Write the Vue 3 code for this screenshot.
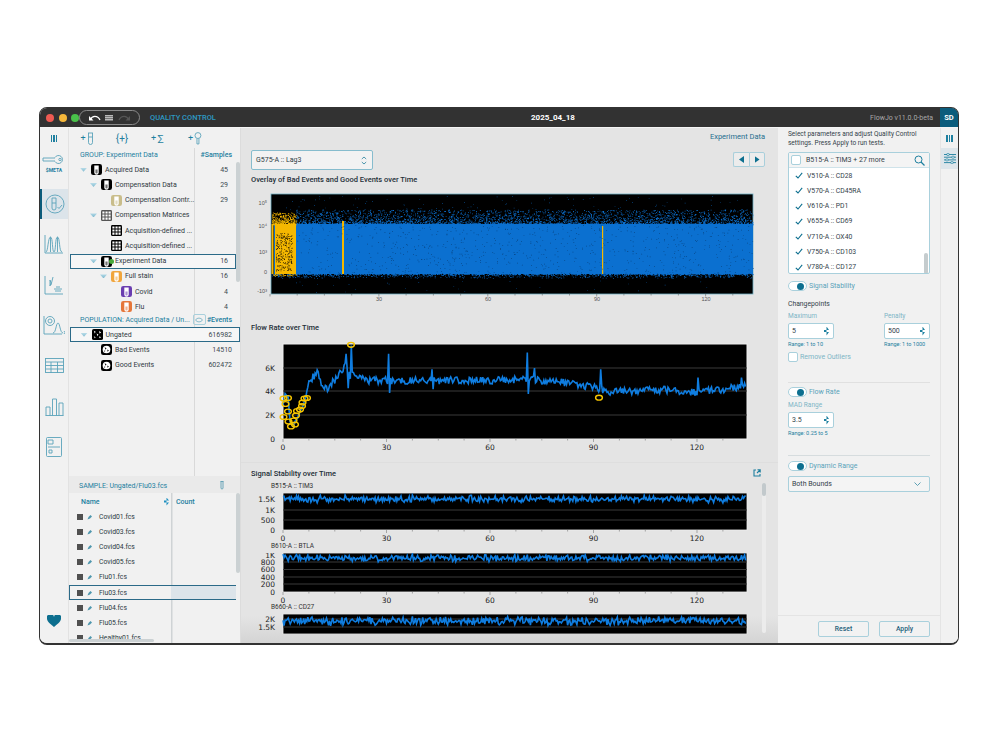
<template>
  <div class="page">
    <!-- shared icons -->
    <svg class="defs" width="0" height="0">
      <symbol id="tube" viewBox="0 0 12 12">
        <rect x="0" y="0" width="12" height="12" rx="2.5" fill="currentColor" />
        <path d="M3.6 1.6h4.8v7.6a2.4 2.400 0 0 1-4.800 0z" fill="#fff" />
        <path d="M4.800 6h2.400v3.200a1.200 1.200 0 0 1-2.400 0z" fill="currentColor" opacity=".55" />
      </symbol>
      <symbol id="grid" viewBox="0 0 12 12">
        <rect x="0" y="0" width="12" height="12" rx="1.5" fill="currentColor" />
        <path d="M1.500 1.500h2.300v2.300H1.500zM4.900 1.500h2.300v2.300H4.900zM8.200 1.500h2.300v2.300H8.200zM1.500 4.900h2.300v2.300H1.500zM4.900 4.900h2.300v2.300H4.900zM8.200 4.900h2.300v2.300H8.200zM1.500 8.200h2.300v2.300H1.500zM4.900 8.200h2.300v2.300H4.900zM8.200 8.200h2.300v2.300H8.200z" fill="#fff" />
      </symbol>
      <symbol id="gate" viewBox="0 0 12 12">
        <rect x="0" y="0" width="12" height="12" rx="2" fill="#000" />
        <path d="M2 2l2 1-1 2zM8 2l2 2-2 1zM5 5l2 1-1 2zM2 8l2 1-1 1zM8 8l2 1-2 1z" fill="#fff" />
      </symbol>
      <symbol id="pop" viewBox="0 0 12 12">
        <rect x="0" y="0" width="12" height="12" rx="2.5" fill="#000" />
        <circle cx="6" cy="6" r="4.2" fill="#fff" />
        <path d="M4 3.600l2 1-1 1.600zM7 6l1.600 1-1.600 1.400zM3.400 7l1.400.4-.8 1.200z" fill="#000" />
      </symbol>
    </svg>

    <div class="window">
      <!-- title bar -->
      <header class="titlebar">
        <div class="lights">
          <span class="light red"></span>
          <span class="light amber"></span>
          <span class="light green"></span>
        </div>
        <div class="history">
          <svg width="14" height="10" viewBox="0 0 14 10"><path d="M2.500 6.500C4 2.500 9.500 2 12 7" fill="none" stroke="#fff" stroke-width="1.300" /><path d="M1 3v4.500h4.500z" fill="#fff" /></svg>
          <span class="history-list"></span>
          <svg width="14" height="10" viewBox="0 0 14 10"><path d="M11.500 6.500C10 2.500 4.500 2 2 7" fill="none" stroke="#555" stroke-width="1.300" /><path d="M13 3v4.500H8.500z" fill="#555" /></svg>
        </div>
        <span class="module">QUALITY CONTROL</span>
        <span class="doc-title">2025_04_18</span>
        <span class="version">FlowJo v11.0.0-beta</span>
        <span class="avatar">SD</span>
      </header>

      <div class="body">
        <!-- left rail -->
        <nav class="rail">
          <div class="rail-bars"><i></i><i></i><i></i></div>
          <div class="rail-item">
            <svg width="24" height="11" viewBox="0 0 24 11" class="ln"><path d="M1 4h12M1 7h12M1 4v3M13 3.500a4 4 0 1 1 0 4" /><circle cx="18" cy="5.500" r="1.200" /></svg>
            <span class="meta">$META</span>
          </div>
          <div class="rail-item active">
            <svg width="20" height="20" viewBox="0 0 20 20" class="ln"><circle cx="10" cy="10" r="9" /><path d="M7 4h4v10a2 2 0 0 1-4 0zM7 9h4M12.500 13l1.500 1.500 3-3.500" /></svg>
          </div>
          <div class="rail-item">
            <svg width="20" height="20" viewBox="0 0 20 20" class="ln"><path d="M1 1v18h18M2 18C4 18 4 3 6.500 3S8 18 10 18 11 3 13.500 3 15 18 18 18M6.500 3v15M13.500 3v15" /></svg>
          </div>
          <div class="rail-item">
            <svg width="20" height="20" viewBox="0 0 20 20" class="ln"><path d="M1 1v18h18M6 5v6l1-3zM9 2l-2 8M10 14h8M11 16h6M12 12h4" /></svg>
          </div>
          <div class="rail-item">
            <svg width="22" height="20" viewBox="0 0 22 20" class="ln"><path d="M1 1v18h18M10 18c3 0 3-10 5-10s2 10 5 10M21 16l1 1.500-1 1.500" /><circle cx="7" cy="6" r="4.500" /><circle cx="7" cy="6" r="2" /></svg>
          </div>
          <div class="rail-item">
            <svg width="19" height="15" viewBox="0 0 19 15" class="ln"><rect x=".5" y=".5" width="18" height="14" /><path d="M.5 4h18M.5 7.500h18M.5 11h18M6 4v11M12.500 4v11" /></svg>
          </div>
          <div class="rail-item">
            <svg width="19" height="19" viewBox="0 0 19 19" class="ln"><path d="M.5 18.500h18M1 18.500V10h4v8.500M7.500 18.500V2h4v16.500M14 18.500V6h4v12.500" /></svg>
          </div>
          <div class="rail-item">
            <svg width="16" height="20" viewBox="0 0 16 20" class="ln"><rect x=".5" y=".5" width="15" height="19" rx="1" /><path d="M2 10h12M2 3h5v4H2zM3 13h3v3H3z" /></svg>
          </div>
          <svg class="heart" width="14" height="12" viewBox="0 0 14 12"><path d="M7 12C2 8 0 6 0 3.500A3.400 3.400 0 0 1 7 2a3.400 3.400 0 0 1 7 1.500C14 6 12 8 7 12z" fill="#0d6f8f" /></svg>
        </nav>

        <!-- tree panel -->
        <aside class="tree-panel">
          <div class="tools">
            <span class="tool"><b>+</b><svg width="7" height="13" viewBox="0 0 7 13" class="ln"><path d="M1 1h5M1.500 1v9.500a2 2 0 0 0 4 0V1M1.500 5h4" /></svg></span>
            <span class="tool">{+}</span>
            <span class="tool"><b>+</b>∑</span>
            <span class="tool"><b>+</b><svg width="8" height="13" viewBox="0 0 8 13" class="ln"><circle cx="4" cy="3.500" r="3" /><path d="M3 6.500V12h2V6.500" /></svg></span>
          </div>

          <div class="tree-head">
            <span class="head-name">GROUP: Experiment Data</span>
            <span class="head-count">#Samples</span>
          </div>
          <div class="tree group-tree">
            <div v-for="(row, i) in groupRows" :key="i" class="tree-row" :class="{ selected: row.selected }" :style="{ paddingLeft: 10 + row.level * 10 + 'px' }">
              <span class="caret" :class="{ open: row.open }"></span>
              <svg class="node-icon" :style="{ color: row.color }"><use :href="'#' + row.icon" /></svg>
              <span v-if="row.selected" class="ok-dot"></span>
              <span class="node-label">{{ row.label }}</span>
              <span class="node-count">{{ row.count }}</span>
            </div>
            <span class="tree-scroll"></span>
          </div>

          <div class="tree-head pop-head">
            <span class="head-name">POPULATION: Acquired Data / Un...</span>
            <span class="eye"><svg width="8" height="6" viewBox="0 0 8 6"><path d="M.5 3C2 .5 6 .5 7.500 3 6 5.500 2 5.500.5 3z" fill="none" stroke="#5aa3ba" stroke-width=".7" /></svg></span>
            <span class="head-count">#Events</span>
          </div>
          <div class="tree pop-tree">
            <div v-for="row in popRows" :key="row.label" class="tree-row" :class="{ selected: row.selected }" :style="{ paddingLeft: 10 + row.level * 10 + 'px' }">
              <span class="caret" :class="{ open: row.open }"></span>
              <svg class="node-icon"><use :href="'#' + row.icon" /></svg>
              <span class="node-label">{{ row.label }}</span>
              <span class="node-count">{{ row.count }}</span>
            </div>
          </div>

          <div class="sample-head">
            <span>SAMPLE: Ungated/Flu03.fcs</span>
            <svg width="4" height="9" viewBox="0 0 4 9"><path d="M.5.500h3M1 .500v6.500a1 1 0 0 0 2 0V.500" fill="none" stroke="#4d96ad" stroke-width=".8" /></svg>
          </div>
          <div class="sample-table">
            <div class="sample-cols">
              <span class="col-name">Name</span>
              <span class="sort"></span>
              <span class="col-count">Count</span>
            </div>
            <div v-for="f in files" :key="f" class="sample-row" :class="{ selected: f === 'Flu03.fcs' }">
              <span class="file-icon"></span>
              <svg class="pen" width="6" height="6" viewBox="0 0 6 6"><path d="M.5 5.500l1-2.500 2-2 1.500 1.500-2 2z" fill="#4d96ad" /></svg>
              <span class="file-name">{{ f }}</span>
            </div>
            <span class="sample-scroll"></span>
            <span class="sample-hscroll"></span>
          </div>
        </aside>

        <!-- charts -->
        <main class="main">
          <div class="crumb">Experiment Data</div>
          <div class="param-row">
            <div class="param-select">
              <span>G575-A :: Lag3</span>
              <svg width="6" height="9" viewBox="0 0 6 9"><path d="M.8 3L3 1l2.200 2M.8 6L3 8l2.200-2" fill="none" stroke="#4d96ad" stroke-width="1" /></svg>
            </div>
            <div class="pager">
              <button><i class="arrow-l"></i></button>
              <button><i class="arrow-r"></i></button>
            </div>
          </div>
          <h3 class="chart-title first">Overlay of Bad Events and Good Events over Time</h3>
          <svg class="overlay" viewBox="245 187 525 117" width="525" height="117">
            <rect x="271" y="193" width="482" height="100" fill="#000" stroke="#6fb0c4" stroke-width=".8" />
            <rect x="296" y="223" width="457" height="50" fill="#0b70d0" />
            <path :d="scatter.blue" fill="#0b70d0" />
            <rect x="271.500" y="223" width="2" height="50" fill="#f5b800" />
            <rect x="274" y="223" width="1" height="50" fill="#0b70d0" />
            <rect x="275" y="223" width="21" height="50" fill="#f5b800" />
            <path :d="scatter.yellow" fill="#f5b800" />
            <rect x="342" y="220" width="2" height="53" fill="#f5b800" />
            <rect x="602" y="225" width="1.200" height="48" fill="#f5b800" />
            <path :d="scatter.black" fill="#063a70" />
            <path :d="scatter.dark" fill="#2a1d00" />
            <g class="axis-sm">
              <text x="379" y="300" text-anchor="middle">30</text>
              <text x="488" y="300" text-anchor="middle">60</text>
              <text x="597" y="300" text-anchor="middle">90</text>
              <text x="706" y="300" text-anchor="middle">120</text>
              <text x="267" y="204" text-anchor="end">10⁵</text>
              <text x="267" y="227" text-anchor="end">10⁴</text>
              <text x="267" y="253" text-anchor="end">10³</text>
              <text x="267" y="273" text-anchor="end">0</text>
              <text x="267" y="292" text-anchor="end">-10³</text>
            </g>
            <path :d="overlayTicks" stroke="#666" stroke-width=".6" fill="none" />
          </svg>

          <h3 class="chart-title second">Flow Rate over Time</h3>
          <svg class="flow" viewBox="245 334 525 117" width="525" height="117">
            <rect x="283" y="343" width="464" height="95" fill="#000" stroke="#eee" stroke-width="1" />
            <path d="M283 367h464M283 390h464M283 414h464" stroke="#3a3a3a" stroke-width="1" />
            <polyline :points="flowLine" fill="none" stroke="#0f7de0" stroke-width="1.600" />
            <ellipse v-for="(p, i) in flowMarks" :key="i" :cx="p[0]" :cy="p[1]" rx="3.400" ry="2.400" fill="none" stroke="#f5c400" stroke-width="1.400" />
            <g class="axis">
              <text v-for="t in xLabels" :key="t" :x="tx(t)" y="449" text-anchor="middle">{{ t }}</text>
              <text x="275" y="370" text-anchor="end">6K</text>
              <text x="275" y="393" text-anchor="end">4K</text>
              <text x="275" y="417" text-anchor="end">2K</text>
              <text x="275" y="441" text-anchor="end">0</text>
            </g>
            <path :d="ticks(438)" stroke="#777" stroke-width=".6" fill="none" />
          </svg>

          <section class="signals">
            <div class="signals-head">
              <h3 class="chart-title">Signal Stability over Time</h3>
              <svg width="8" height="8" viewBox="0 0 8 8"><path d="M3 1H1v6h6V5M4.500.800h2.700v2.700M7 1L4 4" fill="none" stroke="#1d7f9f" stroke-width="1.100" /></svg>
            </div>
            <div class="signals-body">
              <div v-for="plot in signalPlots" :key="plot.name" class="signal" :style="{ height: plot.blockH + 'px' }">
                <div class="signal-name">{{ plot.name }}</div>
                <svg :viewBox="`245 ${plot.top} 515 ${plot.h + 14}`" width="515" :height="plot.h + 14">
                  <rect x="283" :y="plot.top" width="464" :height="plot.h" fill="#000" stroke="#eee" stroke-width=".8" />
                  <path :d="plot.grid" stroke="#3a3a3a" stroke-width="1" />
                  <polyline :points="plot.line" fill="none" stroke="#0f7de0" stroke-width="1.600" />
                  <g class="axis">
                    <text v-for="l in plot.labels" :key="l[0]" x="275" :y="l[1] + 2.500" text-anchor="end">{{ l[0] }}</text>
                    <template v-if="plot.xAxis">
                      <text v-for="t in xLabels" :key="t" :x="tx(t)" :y="plot.top + plot.h + 10.500" text-anchor="middle">{{ t }}</text>
                    </template>
                  </g>
                  <path v-if="plot.xAxis" :d="ticks(plot.top + plot.h)" stroke="#777" stroke-width=".6" fill="none" />
                </svg>
              </div>
              <div class="signals-scroll"><span></span></div>
            </div>
          </section>
        </main>

        <!-- settings -->
        <aside class="settings">
          <div class="settings-scroll">
            <p class="intro">Select parameters and adjust Quality Control settings. Press Apply to run tests.</p>
            <div class="multi">
              <div class="multi-head">
                <span class="check"></span>
                <span class="multi-title">B515-A :: TIM3 + 27 more</span>
                <svg width="11" height="11" viewBox="0 0 11 11"><circle cx="4.500" cy="4.500" r="3.500" fill="none" stroke="#1d7f9f" stroke-width="1" /><path d="M7 7l3.500 3.500" stroke="#1d7f9f" stroke-width="1.200" /></svg>
              </div>
              <div class="multi-list">
                <div v-for="p in params" :key="p" class="multi-row">
                  <svg width="8" height="7" viewBox="0 0 8 7"><path d="M.8 3.800L3 6 7.200.8" fill="none" stroke="#0d6f8f" stroke-width="1.100" /></svg>
                  <span>{{ p }}</span>
                </div>
                <span class="multi-scroll"></span>
              </div>
            </div>

            <label class="toggle-row stability"><span class="toggle"><i></i></span>Signal Stability</label>
            <div class="subhead">Changepoints</div>
            <div class="spin-pair">
              <div class="spin-field">
                <div class="spin-label">Maximum</div>
                <div class="spin"><span>5</span><em></em></div>
                <div class="range">Range: 1 to 10</div>
              </div>
              <div class="spin-field">
                <div class="spin-label">Penalty</div>
                <div class="spin"><span>500</span><em></em></div>
                <div class="range">Range: 1 to 1000</div>
              </div>
            </div>
            <label class="outliers"><span class="check"></span>Remove Outliers</label>

            <hr class="rule flow-rule" />
            <label class="toggle-row"><span class="toggle"><i></i></span>Flow Rate</label>
            <div class="spin-field mad">
              <div class="spin-label">MAD Range</div>
              <div class="spin"><span>3.5</span><em></em></div>
              <div class="range">Range: 0.25 to 5</div>
            </div>

            <hr class="rule dyn-rule" />
            <label class="toggle-row"><span class="toggle"><i></i></span>Dynamic Range</label>
            <div class="bounds">
              <span>Both Bounds</span>
              <svg width="7" height="4" viewBox="0 0 7 4"><path d="M.5.500L3.500 3.500 6.500.500" fill="none" stroke="#4d96ad" stroke-width=".9" /></svg>
            </div>
          </div>
          <div class="settings-foot">
            <button>Reset</button>
            <button>Apply</button>
          </div>
        </aside>

        <!-- right rail -->
        <div class="side-rail">
          <div class="rail-bars"><i></i><i></i><i></i></div>
          <div class="side-tab">
            <svg width="12" height="11" viewBox="0 0 12 11"><path d="M0 1.500h12M0 4.200h12M0 6.900h12M0 9.600h12" stroke="#1d7f9f" stroke-width=".9" /><path d="M3 .500h2v2H3zM8 3.200h2v2H8zM2 5.900h2v2H2zM7 8.600h2v2H7z" fill="#fff" stroke="#1d7f9f" stroke-width=".6" /></svg>
          </div>
        </div>
      </div>
    </div>
  </div>
</template>

<script setup>
// small seeded generator so the noise looks the same on every load
function makeRandom(seed) {
  let s = seed;
  return () => {
    s = (s * 16807) % 2147483647;
    return (s - 1) / 2147483646;
  };
}

const groupRows = [
  { label: "Acquired Data", level: 0, open: true, icon: "tube", color: "#000", count: 45 },
  { label: "Compensation Data", level: 1, open: true, icon: "tube", color: "#000", count: 29 },
  { label: "Compensation Contr...", level: 2, icon: "tube", color: "#c9bd8a", count: 29 },
  { label: "Compensation Matrices", level: 1, open: true, icon: "grid", color: "#555", count: "" },
  { label: "Acquisition-defined ...", level: 2, icon: "grid", color: "#000", count: "" },
  { label: "Acquisition-defined ...", level: 2, icon: "grid", color: "#000", count: "" },
  { label: "Experiment Data", level: 1, open: true, icon: "tube", color: "#000", count: 16, selected: true },
  { label: "Full stain", level: 2, open: true, icon: "tube", color: "#f0a53c", count: 16 },
  { label: "Covid", level: 3, icon: "tube", color: "#6a3db0", count: 4 },
  { label: "Flu", level: 3, icon: "tube", color: "#e5763a", count: 4 },
];

const popRows = [
  { label: "Ungated", level: 0, open: true, icon: "gate", count: 616982, selected: true },
  { label: "Bad Events", level: 1, icon: "pop", count: 14510 },
  { label: "Good Events", level: 1, icon: "pop", count: 602472 },
];

const files = ["Covid01.fcs", "Covid03.fcs", "Covid04.fcs", "Covid05.fcs", "Flu01.fcs", "Flu03.fcs", "Flu04.fcs", "Flu05.fcs", "Healthy01.fcs"];

const params = ["V510-A :: CD28", "V570-A :: CD45RA", "V610-A :: PD1", "V655-A :: CD69", "V710-A :: OX40", "V750-A :: CD103", "V780-A :: CD127"];

const xLabels = [0, 30, 60, 90, 120];
const tx = (t) => 283 + t * 3.45;

// minor ticks every 7.5 units under a plot
const ticks = (y) => {
  let d = "";
  for (let t = 0; t <= 134; t += 7.5) {
    const len = t % 30 === 0 ? 3 : 1.5;
    d += `M${tx(t).toFixed(1)} ${y}v${len}`;
  }
  return d;
};

let overlayTicks = "";
for (let t = 0; t <= 130; t += 7.5) {
  const x = 270 + t * 3.63;
  overlayTicks += `M${x.toFixed(1)} 293v${t % 30 === 0 ? 2.5 : 1.5}`;
}

// overlay scatter, kept as single paths
function buildScatter() {
  const rnd = makeRandom(4242);
  const dot = (x, y, s = 0.8) => `M${x.toFixed(1)} ${y.toFixed(1)}h${s}v${s}h-${s}z`;
  let blue = "";
  let yellow = "";
  let black = "";
  let dark = "";
  for (let i = 0; i < 5200; i++) {
    blue += dot(296 + rnd() * 457, 223.5 - Math.pow(rnd(), 3.2) * 15);
  }
  for (let i = 0; i < 90; i++) blue += dot(280 + rnd() * 473, 195 + rnd() * 14, 0.6);
  for (let i = 0; i < 1300; i++) blue += dot(272 + rnd() * 481, 273 + Math.pow(rnd(), 4) * 4);
  for (let i = 0; i < 30; i++) blue += dot(272 + rnd() * 481, 279 + rnd() * 13, 0.6);
  for (let i = 0; i < 420; i++) yellow += dot(272 + rnd() * 24, 223.5 - Math.pow(rnd(), 2) * 12);
  for (let i = 0; i < 40; i++) yellow += dot(272 + rnd() * 24, 273 + rnd() * 2);
  for (let i = 0; i < 750; i++) black += dot(296 + rnd() * 457, 224 + rnd() * 49, 0.7);
  for (let i = 0; i < 260; i++) dark += dot(276 + rnd() * 16, 232 + rnd() * 38, 0.8);
  return { blue, yellow, black, dark };
}
const scatter = buildScatter();

// flow rate curve from hand read anchors, then noise and spikes on top
const flowAnchors = [[0, 3000], [0.6, 3900], [1.5, 3500], [2, 1500], [3, 1100], [5, 2300], [6.5, 3400], [7.5, 4900], [9, 5300], [10, 5800], [11, 4700], [13, 4300], [15, 5000], [17, 5800], [18, 6300], [19, 5400], [21, 5300], [25, 4950], [60, 4950], [70, 5050], [80, 4850], [90, 4350], [95, 4000], [110, 4150], [120, 3950], [126, 4150], [134, 4450]];
const flowSpikes = { 18.3: 7200, 18.9: 4300, 19.8: 7900, 30.6: 7200, 30.9: 3900, 43.5: 4200, 43.2: 5900, 70.8: 7300, 71.1: 3800, 72.9: 6000, 92: 5900, 120.3: 5200, 120: 3700, 133: 5200 };

const flowY = (v) => 438 - v * 0.01183;

function anchorValue(t) {
  for (let i = 1; i < flowAnchors.length; i++) {
    const [t0, v0] = flowAnchors[i - 1];
    const [t1, v1] = flowAnchors[i];
    if (t <= t1) return v0 + ((v1 - v0) * (t - t0)) / (t1 - t0);
  }
  return flowAnchors[flowAnchors.length - 1][1];
}

function buildFlow() {
  const rnd = makeRandom(77);
  const pts = [];
  for (let i = 0; i <= 447; i++) {
    const t = i * 0.3;
    let v = anchorValue(t) + (t > 8 ? (rnd() - 0.5) * 620 : (rnd() - 0.5) * 200);
    const key = Object.keys(flowSpikes).find((k) => Math.abs(k - t) < 0.15);
    if (key) v = flowSpikes[key];
    pts.push(`${tx(t).toFixed(1)},${flowY(v).toFixed(1)}`);
  }
  return pts.join(" ");
}
const flowLine = buildFlow();

const flowMarks = [[283.5, 397.5], [288, 397], [285.5, 403], [288, 410.5], [283.5, 416], [288.5, 420.5], [291, 425.5], [295, 423.5], [293.5, 419.5], [296, 414.5], [297, 410], [300, 408.5], [302, 405], [302.5, 401.5], [304.5, 397.5], [307, 397], [351, 343.8], [599, 396.7]];

// stability traces
function buildSignal(y, amp, seed) {
  const rnd = makeRandom(seed);
  const pts = [];
  for (let i = 0; i <= 447; i++) {
    const n = (rnd() + rnd() - 1) * amp;
    pts.push(`${tx(i * 0.3).toFixed(1)},${(y + n).toFixed(1)}`);
  }
  return pts.join(" ");
}

const signalPlots = [
  { name: "B515-A :: TIM3", top: 492, h: 37, blockH: 60, xAxis: true, grid: "M283 509h464M283 519h464", line: buildSignal(498, 4, 11), labels: [["1.5K", 498.5], ["1K", 509], ["500", 519], ["0", 529]] },
  { name: "B610-A :: BTLA", top: 552, h: 39, blockH: 61, xAxis: true, grid: "M283 561h464M283 568.5h464M283 576h464M283 583h464", line: buildSignal(557, 4, 23), labels: [["1K", 554], ["800", 561], ["600", 568.5], ["400", 576], ["200", 583], ["0", 591]] },
  { name: "B660-A :: CD27", top: 613, h: 20, blockH: 30, xAxis: false, grid: "M283 618h464M283 626h464", line: buildSignal(620, 5, 37), labels: [["2K", 618], ["1.5K", 626]] },
];
</script>

<style>
html,
body {
  margin: 0;
  background: #fff;
}
</style>

<style scoped>
.page {
  width: 1000px;
  height: 750px;
  padding: 107px 0 0 39px;
  box-sizing: border-box;
  font-family: Roboto, "Noto Sans", sans-serif;
  color: #2b3a42;
  overflow: hidden;
}

.defs {
  position: absolute;
}

.window {
  width: 920px;
  height: 538px;
  box-sizing: border-box;
  border: 1px solid #333;
  border-bottom-width: 2px;
  border-radius: 8px;
  overflow: hidden;
  display: flex;
  flex-direction: column;
  background: #f1f1f1;
}

.titlebar {
  height: 19px;
  flex: none;
  background: #323232;
  border-bottom: 1px solid #f4f4f4;
  display: flex;
  align-items: center;
  position: relative;
}

.lights {
  display: flex;
  gap: 4.5px;
  margin-left: 6px;
}

.light {
  width: 8px;
  height: 8px;
  border-radius: 50%;
}

.red { background: #ee5a52; }
.amber { background: #f5b73a; }
.green { background: #49c14a; }

.history {
  width: 61px;
  height: 15px;
  box-sizing: border-box;
  border: 1px solid #8a8a8a;
  border-radius: 8px;
  display: flex;
  align-items: center;
  justify-content: space-around;
  padding: 0 6px;
}

.history-list {
  width: 8px;
  height: 6px;
  background: repeating-linear-gradient(#bbb 0 1px, #777 1px 2px);
}

.module {
  margin-left: 10px;
  font-size: 7.5px;
  font-weight: 500;
  color: #2d9ac4;
}

.doc-title {
  position: absolute;
  left: 491px;
  font-size: 8px;
  font-weight: 700;
  color: #fff;
}

.version {
  margin-left: auto;
  margin-right: 7px;
  font-size: 7px;
  color: #a8a8a8;
}

.avatar {
  width: 18px;
  height: 100%;
  background: #0b5c7c;
  color: #fff;
  font-size: 7.5px;
  font-weight: 700;
  display: flex;
  align-items: center;
  justify-content: center;
}

.body {
  flex: 1;
  min-height: 0;
  display: flex;
}

.ln {
  fill: none;
  stroke: #5aa3ba;
  stroke-width: 0.9;
}

/* left rail */
.rail {
  width: 29px;
  flex: none;
  display: flex;
  flex-direction: column;
  align-items: center;
  gap: 10.6px;
  background: #f1f1f1;
  border-right: 1px solid #e2e2e2;
  box-sizing: border-box;
}

.rail-bars {
  height: 20px;
  display: flex;
  gap: 1px;
  align-items: center;
  justify-content: center;
  flex: none;
}

.rail-bars i {
  width: 1.5px;
  height: 7px;
  background: #1d7f9f;
}

.rail > .rail-bars {
  margin-bottom: -10.6px;
}

.rail-item {
  width: 100%;
  height: 30px;
  flex: none;
  display: flex;
  flex-direction: column;
  align-items: center;
  justify-content: center;
  box-sizing: border-box;
}

.rail-item.active {
  background: #dce4ea;
  border-left: 2px solid #0b5c7c;
}

.meta {
  font-size: 5px;
  font-weight: 700;
  color: #1d7f9f;
  margin-top: 2px;
}

.heart {
  margin-top: auto;
  margin-bottom: 16px;
}

/* tree */
.tree-panel {
  width: 171px;
  flex: none;
  display: flex;
  flex-direction: column;
  background: #f1f1f1;
}

.tools {
  height: 20px;
  flex: none;
  display: flex;
  align-items: center;
  padding-left: 11px;
  gap: 21px;
  color: #1d7f9f;
  font-size: 10px;
}

.tool {
  width: 14px;
  display: flex;
  align-items: center;
  justify-content: center;
  white-space: nowrap;
}

.tool:last-child {
  margin-left: 3px;
}

.tool b {
  font-weight: 400;
  font-size: 9px;
  margin-right: 1px;
}

.tree-head {
  height: 14px;
  flex: none;
  display: flex;
  align-items: center;
  padding-left: 11px;
  font-size: 7px;
  color: #1d7f9f;
  background: linear-gradient(#d9d9d9, #d9d9d9) 125px 0 / 1px 100% no-repeat;
}

.head-name {
  white-space: nowrap;
}

.head-count {
  margin-left: auto;
  margin-right: 8px;
  font-weight: 500;
}

.tree {
  position: relative;
  background: linear-gradient(#d9d9d9, #d9d9d9) 125px 0 / 1px 100% no-repeat;
}

.group-tree {
  height: 150px;
  flex: none;
  overflow: hidden;
}

.tree-row {
  height: 15.26px;
  display: flex;
  align-items: center;
  box-sizing: border-box;
  font-size: 7px;
  position: relative;
}

.tree-row.selected {
  border: 1.3px solid #2b6a88;
  margin: 0 4px 0 1px;
  background: #f6f6f6;
}

.group-tree .tree-row.selected {
  padding-left: 18px !important;
}

.pop-tree .tree-row.selected {
  margin-right: 0;
  padding-left: 8.5px !important;
}

.caret {
  width: 10px;
  flex: none;
}

.caret.open::before {
  content: "";
  display: block;
  margin-left: 1px;
  width: 7px;
  height: 4px;
  background: linear-gradient(#b9dce8, #7fbad0);
  clip-path: polygon(0 0, 100% 0, 50% 100%);
}

.node-icon {
  width: 11px;
  height: 11px;
  flex: none;
  margin-left: 2px;
  margin-right: 3px;
}

.ok-dot {
  width: 5px;
  height: 5px;
  border-radius: 50%;
  background: #47a83a;
  margin-left: -6px;
  margin-right: 1px;
  margin-top: 1px;
  flex: none;
}

.node-label {
  white-space: nowrap;
  color: #30393f;
}

.node-count {
  position: absolute;
  right: 12px;
  color: #3c4a52;
}

.group-tree .selected .node-count {
  right: 7px;
}

.pop-tree .node-count {
  right: 8px;
}

.pop-tree .selected .node-count {
  right: 7px;
}

.tree-scroll {
  position: absolute;
  right: 0;
  top: 0;
  width: 4px;
  height: 120px;
  border-radius: 2px;
  background: #cbd1d3;
}

.pop-head {
  height: 15px;
}

.eye {
  width: 11px;
  height: 9px;
  margin-left: 3px;
  border: 1px solid #a9d0dc;
  border-radius: 2px;
  display: flex;
  align-items: center;
  justify-content: center;
}

.pop-tree {
  height: 149px;
  flex: none;
}

.sample-head {
  height: 17px;
  flex: none;
  box-sizing: border-box;
  display: flex;
  align-items: center;
  justify-content: space-between;
  padding: 2px 16px 0 10px;
  background: #eaeaea;
  font-size: 7px;
  color: #1d7f9f;
}

.sample-table {
  flex: 1;
  min-height: 0;
  position: relative;
  overflow: hidden;
  background: linear-gradient(#cfd3d5, #cfd3d5) 102px 0 / 1.5px 100% no-repeat;
}

.sample-cols {
  height: 15px;
  margin-top: 1px;
  display: flex;
  align-items: center;
  font-size: 7px;
  color: #1d7f9f;
  font-weight: 500;
}

.col-name {
  width: 80px;
  margin-left: 12px;
}

.sort {
  margin-left: 3px;
  width: 5px;
  height: 8px;
  background: #1d8fc0;
  clip-path: polygon(50% 0, 100% 38%, 0 38%, 0 62%, 100% 62%, 50% 100%);
}

.col-count {
  margin-left: 7px;
}

.sample-row {
  height: 15.2px;
  display: flex;
  align-items: center;
  box-sizing: border-box;
  padding-left: 8px;
  font-size: 6.8px;
}

.sample-row.selected {
  border: 1.3px solid #2b6a88;
  border-right: none;
  margin: 0 4px 0 0;
  padding-left: 7px;
  background: linear-gradient(90deg, transparent 101px, #dce4ea 101px);
}

.file-icon {
  width: 6px;
  height: 6px;
  flex: none;
  background: #505050;
}

.pen {
  margin-left: 4px;
}

.file-name {
  margin-left: 6px;
  white-space: nowrap;
}

.sample-scroll {
  position: absolute;
  right: 0;
  top: 0;
  width: 4px;
  height: 80px;
  border-radius: 2px;
  background: #cbd1d3;
}

.sample-hscroll {
  position: absolute;
  left: 0;
  bottom: 1px;
  width: 85px;
  height: 3px;
  border-radius: 2px;
  background: #cbd1d3;
}

/* main */
.main {
  width: 538px;
  flex: none;
  background: #e4e4e4;
  display: flex;
  flex-direction: column;
  overflow: hidden;
  border-left: 1px solid #dcdcdc;
  box-sizing: border-box;
}

.crumb {
  height: 17px;
  flex: none;
  text-align: right;
  padding: 4px 13px 0 0;
  box-sizing: border-box;
  font-size: 7.5px;
  color: #1f6f8f;
}

.param-row {
  height: 29px;
  flex: none;
  display: flex;
  align-items: flex-start;
  justify-content: space-between;
  padding: 5px 13px 0 10px;
  box-sizing: border-box;
}

.param-select {
  width: 122px;
  height: 20px;
  box-sizing: border-box;
  border: 1px solid #86bccd;
  border-radius: 2px;
  background: #f2f2f2;
  display: flex;
  align-items: center;
  justify-content: space-between;
  padding: 0 5px 0 4px;
  font-size: 7px;
}

.pager {
  display: flex;
  margin-top: 2px;
}

.pager button {
  width: 16px;
  height: 15px;
  padding: 0;
  border: 1px solid #a9cfdb;
  background: #ececec;
  display: flex;
  align-items: center;
  justify-content: center;
}

.pager button:first-child {
  border-right: none;
  border-radius: 2px 0 0 2px;
}

.pager button:last-child {
  border-radius: 0 2px 2px 0;
}

.arrow-l,
.arrow-r {
  width: 5px;
  height: 7px;
  background: #0d6f8f;
}

.arrow-l {
  clip-path: polygon(100% 0, 100% 100%, 0 50%);
}

.arrow-r {
  clip-path: polygon(0 0, 100% 50%, 0 100%);
}

.chart-title {
  margin: 0;
  font-size: 7.5px;
  font-weight: 500;
  color: #1e2f38;
}

.chart-title.first {
  height: 14px;
  flex: none;
  padding-left: 10px;
  line-height: 12px;
}

.overlay,
.flow {
  flex: none;
  display: block;
  margin-left: 4px;
}

.chart-title.second {
  height: 30px;
  flex: none;
  box-sizing: border-box;
  padding: 17px 0 0 10px;
  line-height: 12px;
}

.axis-sm text {
  font-family: "Liberation Sans", sans-serif;
  font-size: 5.5px;
  fill: #555;
}

.axis text {
  font-family: "DejaVu Sans", sans-serif;
  font-size: 7.5px;
  fill: #222;
}

.signals {
  flex: 1;
  min-height: 0;
  display: flex;
  flex-direction: column;
  margin-top: 10px;
  border-top: 1px solid #dedede;
  overflow: hidden;
  background: linear-gradient(#e4e4e4 85%, #d4d4d4);
}

.signals-head {
  height: 20px;
  flex: none;
  display: flex;
  align-items: center;
  justify-content: space-between;
  padding: 0 17px 0 10px;
}

.signals-body {
  flex: 1;
  min-height: 0;
  position: relative;
}

.signal {
  display: flex;
  flex-direction: column;
  overflow: hidden;
  margin-left: 4px;
}

.signal-name {
  height: 10px;
  flex: none;
  font-size: 6.5px;
  padding-left: 26px;
  line-height: 6px;
  color: #333;
}

.signal svg {
  display: block;
  flex: none;
}

.signals-scroll {
  position: absolute;
  right: 12px;
  top: 0;
  width: 4px;
  height: 150px;
  background: #ececec;
  border-radius: 2px;
}

.signals-scroll span {
  display: block;
  height: 13px;
  background: #c2c9cc;
  border-radius: 2px;
}

/* settings */
.settings {
  width: 162px;
  flex: none;
  display: flex;
  flex-direction: column;
  background: #f1f1f1;
  color: #33424a;
  box-sizing: border-box;
}

.settings-scroll {
  flex: 1;
  min-height: 0;
  padding: 2px 10px 0;
}

.intro {
  margin: 0 0 4px;
  font-size: 6.5px;
  line-height: 9px;
}

.multi {
  border: 1px solid #a9d0dc;
  border-radius: 2px;
  height: 122px;
  box-sizing: border-box;
  display: flex;
  flex-direction: column;
  background: #fff;
  overflow: hidden;
}

.multi-head {
  height: 14px;
  flex: none;
  display: flex;
  align-items: center;
  padding: 0 4px 0 2px;
  background: #f4f4f4;
  border-bottom: 1px solid #cfe3ea;
  font-size: 7px;
}

.multi-title {
  margin-left: 5px;
  flex: 1;
}

.check {
  width: 10px;
  height: 10px;
  box-sizing: border-box;
  border: 1px solid #a9d0dc;
  border-radius: 2px;
  background: #fff;
  flex: none;
}

.multi-list {
  flex: 1;
  position: relative;
}

.multi-row {
  height: 15.28px;
  display: flex;
  align-items: center;
  padding-left: 6px;
  gap: 4px;
  font-size: 6.8px;
}

.multi-scroll {
  position: absolute;
  right: 1px;
  bottom: 1px;
  width: 4px;
  height: 21px;
  background: #c5ccce;
  border-radius: 2px;
}

.toggle-row {
  display: flex;
  align-items: center;
  gap: 2px;
  height: 12px;
  font-size: 7px;
  color: #5aa3ba;
}

.stability {
  margin-top: 6px;
}

.toggle {
  width: 19px;
  height: 10px;
  box-sizing: border-box;
  border: 1px solid #a9d0dc;
  border-radius: 6px;
  background: #fff;
  display: flex;
  justify-content: flex-end;
  align-items: center;
  padding-right: 2px;
}

.toggle i {
  width: 7px;
  height: 7px;
  border-radius: 50%;
  background: #0d6f8f;
}

.subhead {
  margin-top: 7px;
  height: 11px;
  line-height: 11px;
  font-size: 6.8px;
}

.spin-pair {
  display: flex;
  justify-content: space-between;
  margin-top: 2px;
}

.spin-label {
  height: 9px;
  line-height: 9px;
  font-size: 6.5px;
  color: #7db5c6;
  margin-bottom: 2px;
}

.spin {
  width: 46px;
  height: 16px;
  box-sizing: border-box;
  border: 1px solid #a9d0dc;
  border-radius: 2px;
  background: #fff;
  display: flex;
  align-items: center;
  justify-content: space-between;
  padding: 0 4px 0 3px;
  font-size: 7px;
}

.spin em {
  width: 5px;
  height: 9px;
  background: #1d7f9f;
  clip-path: polygon(50% 0, 100% 38%, 0 38%, 0 62%, 100% 62%, 50% 100%);
}

.range {
  margin-top: 1px;
  height: 9px;
  line-height: 9px;
  font-size: 5.5px;
  color: #1d7f9f;
}

.outliers {
  margin-top: 3px;
  display: flex;
  align-items: center;
  gap: 2px;
  font-size: 7px;
  color: #7db5c6;
}

.rule {
  border: none;
  border-top: 1px solid #e0e0e0;
  margin: 0;
}

.flow-rule {
  margin-top: 20px;
  margin-bottom: 3px;
}

.mad {
  margin-top: 3px;
}

.dyn-rule {
  margin-top: 17px;
  margin-bottom: 4px;
  border-top-color: #d6dcde;
}

.bounds {
  margin-top: 4px;
  height: 16px;
  box-sizing: border-box;
  border: 1px solid #a9d0dc;
  border-radius: 2px;
  background: #f4f4f4;
  display: flex;
  align-items: center;
  justify-content: space-between;
  padding: 0 8px 0 3px;
  font-size: 7px;
}

.settings-foot {
  height: 28px;
  flex: none;
  box-sizing: border-box;
  border-top: 1px solid #e4e4e4;
  display: flex;
  justify-content: flex-end;
  align-items: flex-start;
  gap: 10px;
  padding: 5px 10px 0 0;
}

.settings-foot button {
  width: 51px;
  height: 16px;
  padding: 0;
  border: 1px solid #a9d0dc;
  border-radius: 2px;
  background: #f2f2f2;
  color: #1f5f7a;
  font-family: inherit;
  font-size: 6.8px;
  font-weight: 500;
}

/* right rail */
.side-rail {
  flex: 1;
  display: flex;
  flex-direction: column;
  border-left: 1px solid #e4e4e4;
  background: #f1f1f1;
}

.side-tab {
  height: 21px;
  background: #dde5ea;
  display: flex;
  align-items: center;
  justify-content: center;
}
</style>
